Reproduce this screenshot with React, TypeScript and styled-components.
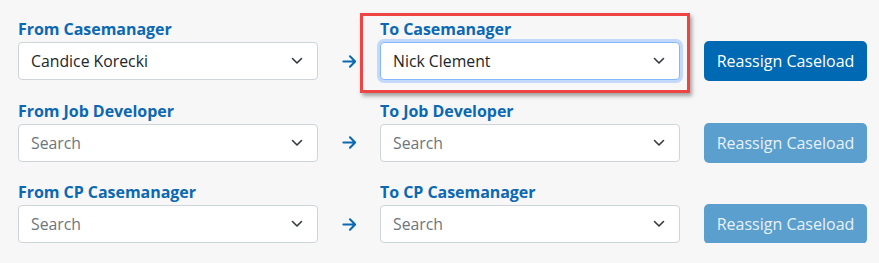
import * as React from "react";
import styled, { createGlobalStyle, css } from "styled-components";

const GlobalStyle = createGlobalStyle`
  html, body {
    margin: 0;
    padding: 0;
    background: #f7f7f7;
  }
  body {
    font-family: "Open Sans", "Noto Sans", sans-serif;
    color: #212529;
  }
`;

const Page = styled.div`
  padding: 19px 0 0 18px;
  display: flex;
  flex-direction: column;
  gap: 20.5px;
`;

const Row = styled.div`
  display: grid;
  grid-template-columns: 300px 62px 300px auto;
  grid-template-rows: 20px 38px;
  row-gap: 3px;
  align-items: center;
`;

const Label = styled.label<{ $col: number }>`
  grid-row: 1;
  grid-column: ${(p) => p.$col};
  font-size: 16px;
  font-weight: 700;
  line-height: 20px;
  color: #0b68b3;
  letter-spacing: -0.05px;
`;

const SelectBox = styled.div<{ $col: number; $focused?: boolean }>`
  grid-row: 2;
  grid-column: ${(p) => p.$col};
  height: 38px;
  box-sizing: border-box;
  display: flex;
  align-items: center;
  justify-content: space-between;
  padding: 0 14px 0 12px;
  background: #fff;
  border: 1px solid #ced4da;
  border-radius: 4px;
  font-size: 15.8px;
  ${(p) =>
    p.$focused &&
    css`
      border-color: #86b7fe;
      box-shadow: 0 0 0 3px #c2d9fb;
    `}
`;

const Value = styled.span<{ $placeholder?: boolean }>`
  color: ${(p) => (p.$placeholder ? "#6c757d" : "#212529")};
`;

const Arrow = styled.div`
  grid-row: 2;
  grid-column: 2;
  display: flex;
  justify-content: center;
  color: #0b68b3;
`;

const Button = styled.button<{ $disabled?: boolean }>`
  grid-row: 2;
  grid-column: 4;
  margin-left: 24px;
  height: 40px;
  width: 163px;
  border: none;
  border-radius: 5px;
  background: ${(p) => (p.$disabled ? "#5b9fcf" : "#0069b4")};
  color: ${(p) => (p.$disabled ? "#e8f1f9" : "#fff")};
  font-family: "Open Sans", "Noto Sans", sans-serif;
  font-size: 16px;
  padding: 0;
`;

const Highlight = styled.div`
  position: absolute;
  left: 360px;
  top: 13px;
  width: 330px;
  height: 80px;
  box-sizing: border-box;
  border: 3px solid #ef4444;
  box-shadow: 2px 3px 4px rgba(0, 0, 0, 0.35);
  pointer-events: none;
`;

const Wrap = styled.div`
  position: relative;
`;

const Chevron = () => (
  <svg width="12" height="8" viewBox="0 0 12 8" fill="none">
    <path d="M1.5 1.5 6 6l4.5-4.5" stroke="#343a40" strokeWidth="1.6" strokeLinecap="round" strokeLinejoin="round" />
  </svg>
);

const ArrowIcon = () => (
  <svg width="15" height="15" viewBox="0 0 16 16" fill="none">
    <path d="M1.5 8h12M8.5 2.5 14 8l-5.5 5.5" stroke="currentColor" strokeWidth="2.2" strokeLinecap="round" strokeLinejoin="round" />
  </svg>
);

type Pair = { from: string; to: string; fromValue?: string; toValue?: string; active?: boolean };

const rows: Pair[] = [
  { from: "From Casemanager", to: "To Casemanager", fromValue: "Candice Korecki", toValue: "Nick Clement", active: true },
  { from: "From Job Developer", to: "To Job Developer" },
  { from: "From CP Casemanager", to: "To CP Casemanager" },
];

export default function App() {
  return (
    <Wrap>
      <GlobalStyle />
      <Page>
        {rows.map((r, i) => (
          <Row key={i}>
            <Label $col={1}>{r.from}</Label>
            <SelectBox $col={1}>
              <Value $placeholder={!r.fromValue}>{r.fromValue ?? "Search"}</Value>
              <Chevron />
            </SelectBox>
            <Arrow>
              <ArrowIcon />
            </Arrow>
            <Label $col={3}>{r.to}</Label>
            <SelectBox $col={3} $focused={i === 0}>
              <Value $placeholder={!r.toValue}>{r.toValue ?? "Search"}</Value>
              <Chevron />
            </SelectBox>
            <Button $disabled={!r.active}>Reassign Caseload</Button>
          </Row>
        ))}
      </Page>
      <Highlight />
    </Wrap>
  );
}
